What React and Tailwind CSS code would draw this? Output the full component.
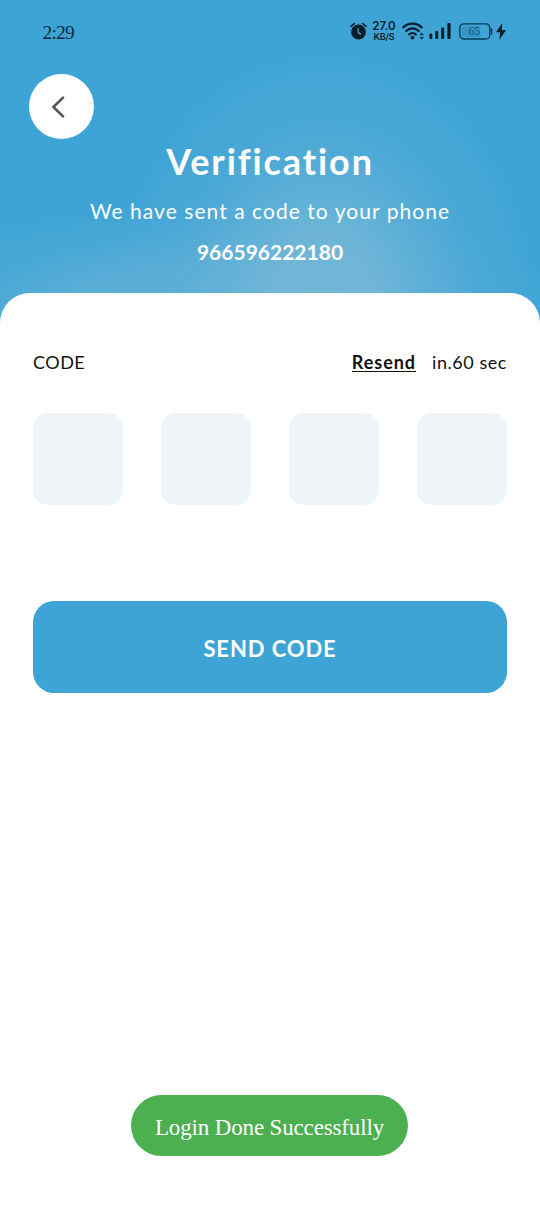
const AlarmIcon = () => (
  <svg width="17" height="18" viewBox="0 0 17 18" fill="none">
    <circle cx="8.5" cy="10" r="7.4" fill="#071d2b" />
    <path d="M1 4.3 4.4 1.5M16 4.3l-3.4-2.8" stroke="#071d2b" strokeWidth="1.6" strokeLinecap="round" />
    <path d="M8.2 6.8v3.5l2.2 1.8" stroke="#3da4d5" strokeWidth="1.4" strokeLinecap="round" />
  </svg>
);

const WifiIcon = () => (
  <svg width="23" height="18" viewBox="0 0 23 18" fill="none">
    <path d="M1.4 5.4a13 13 0 0 1 18.2 0M4.3 9a8.8 8.8 0 0 1 12.4 0M7.3 12.4a4.6 4.6 0 0 1 6.4 0" stroke="#071d2b" strokeWidth="2.3" strokeLinecap="round" />
    <circle cx="10.5" cy="15.6" r="1.9" fill="#071d2b" />
    <path d="m17.3 13.2 2.4-2.8 2.4 2.8zM17.3 14.9l2.4 2.8 2.4-2.8z" fill="#0d3d58" />
  </svg>
);

const SignalIcon = () => (
  <svg width="22" height="16" viewBox="0 0 22 16" fill="#071d2b">
    <rect x="0.4" y="10.5" width="2.9" height="5.5" rx="1" />
    <rect x="6.2" y="8" width="3" height="8" rx="1" />
    <rect x="12.2" y="4.5" width="3" height="11.5" rx="1" />
    <rect x="18.4" y="0" width="3.2" height="16" rx="1" />
  </svg>
);

const BatteryIcon = () => (
  <svg width="34" height="17" viewBox="0 0 34 17" fill="none">
    <rect x="3" y="3" width="18" height="11" rx="2.5" fill="#3595c4" />
    <rect x="0.8" y="0.8" width="30" height="15.2" rx="4" stroke="#0b3852" strokeWidth="1.3" />
    <path d="M32.5 6v5" stroke="#0b3852" strokeWidth="1.6" strokeLinecap="round" />
    <text x="15.2" y="12.4" textAnchor="middle" fill="#0d4f75" fontSize="11.5" fontFamily="Liberation Serif, serif">65</text>
  </svg>
);

const BoltIcon = () => (
  <svg width="10" height="17" viewBox="0 0 10 17" fill="#071d2b">
    <path d="M6.3 0 0 9.2h4.1L3.4 17 10 7H5.8z" />
  </svg>
);

const StatusBar = () => (
  <div className="flex h-[62px] items-center justify-between pr-[34px] pl-[42.5px] text-[#0b2c40]">
    <span className="pt-[3px] font-['Liberation_Serif',serif] text-[19.5px] leading-none tracking-[-0.8px]">2:29</span>
    <div className="flex items-center">
      <AlarmIcon />
      <div className="ml-[5px] flex w-6 flex-col items-center font-['Inter',sans-serif] text-[#071d2b]">
        <span className="text-[11.5px] leading-[11px] font-semibold">27.0</span>
        <span className="text-[9px] leading-[9px] font-semibold tracking-[-0.1px]">KB/S</span>
      </div>
      <div className="ml-1.5"><WifiIcon /></div>
      <div className="ml-1"><SignalIcon /></div>
      <div className="ml-2"><BatteryIcon /></div>
      <div className="ml-[3px]"><BoltIcon /></div>
    </div>
  </div>
);

const Header = () => (
  <header className="h-[323px] bg-[#3da4d5] bg-[radial-gradient(ellipse_220px_260px_at_325px_300px,#72b6d7_0%,#70b6d7f0_25%,#66b2d7b8_45%,#58acd760_70%,#3da4d500_100%),radial-gradient(ellipse_370px_130px_at_210px_325px,#68b3d7_0%,#64b1d7b8_45%,#4faad660_75%,#3da4d500_100%)]">
    <StatusBar />
    <button
      aria-label="Back"
      className="mt-3 ml-[29px] flex size-[65px] items-center justify-center rounded-full bg-white pr-[7px]"
    >
      <svg width="14" height="22" viewBox="0 0 14 22" fill="none" stroke="#56565e" strokeWidth="2.6" strokeLinecap="round" strokeLinejoin="round">
        <path d="M12 1.6 2.4 11l9.6 9.4" />
      </svg>
    </button>
    <div className="flex flex-col items-center text-white">
      <h1 className="mt-px text-[36px] leading-[42px] font-bold tracking-[1.9px]">Verification</h1>
      <p className="mt-[17px] text-[21px] leading-6 tracking-[1.05px]">We have sent a code to your phone</p>
      <p className="mt-[17px] text-[21px] leading-6 font-bold">966596222180</p>
    </div>
  </header>
);

const CodeForm = () => (
  <main className="-mt-[30px] flex-1 rounded-t-[30px] bg-white px-[33px] pt-[57px]">
    <div className="flex h-6 items-center justify-between text-[18px] text-[#111111]">
      <span className="tracking-[0.5px]">CODE</span>
      <div className="flex items-baseline gap-4">
        <button className="border-b border-[#111111] leading-[17px] font-bold tracking-[0.95px]">Resend</button>
        <span className="tracking-[0.55px]">in.60 sec</span>
      </div>
    </div>
    <div className="mt-[39px] flex justify-between">
      {[0, 1, 2, 3].map((i) => (
        <input
          key={i}
          maxLength={1}
          aria-label={`Digit ${i + 1}`}
          className="h-[92px] w-[89.5px] rounded-[15px] bg-[#eff4f9] text-center text-2xl outline-none"
        />
      ))}
    </div>
    <button className="mt-[96.4px] h-[92px] w-full rounded-[21px] bg-[#3da4d5] pt-0.5 text-[22px] font-bold tracking-[0.9px] text-white">
      SEND CODE
    </button>
  </main>
);

const Toast = () => (
  <div className="mr-px mb-[50px] flex h-[61px] w-[277px] items-center justify-center self-center rounded-full bg-[#4caf50] pt-1.5 font-['Liberation_Serif',serif] text-[23px] tracking-[-0.15px] text-white">
    <span className="whitespace-nowrap">Login Done Successfully</span>
  </div>
);

export default function App() {
  return (
    <div className="flex h-[1206px] w-[540px] flex-col overflow-hidden bg-white font-['Lato',sans-serif]">
      <Header />
      <CodeForm />
      <Toast />
    </div>
  );
}
